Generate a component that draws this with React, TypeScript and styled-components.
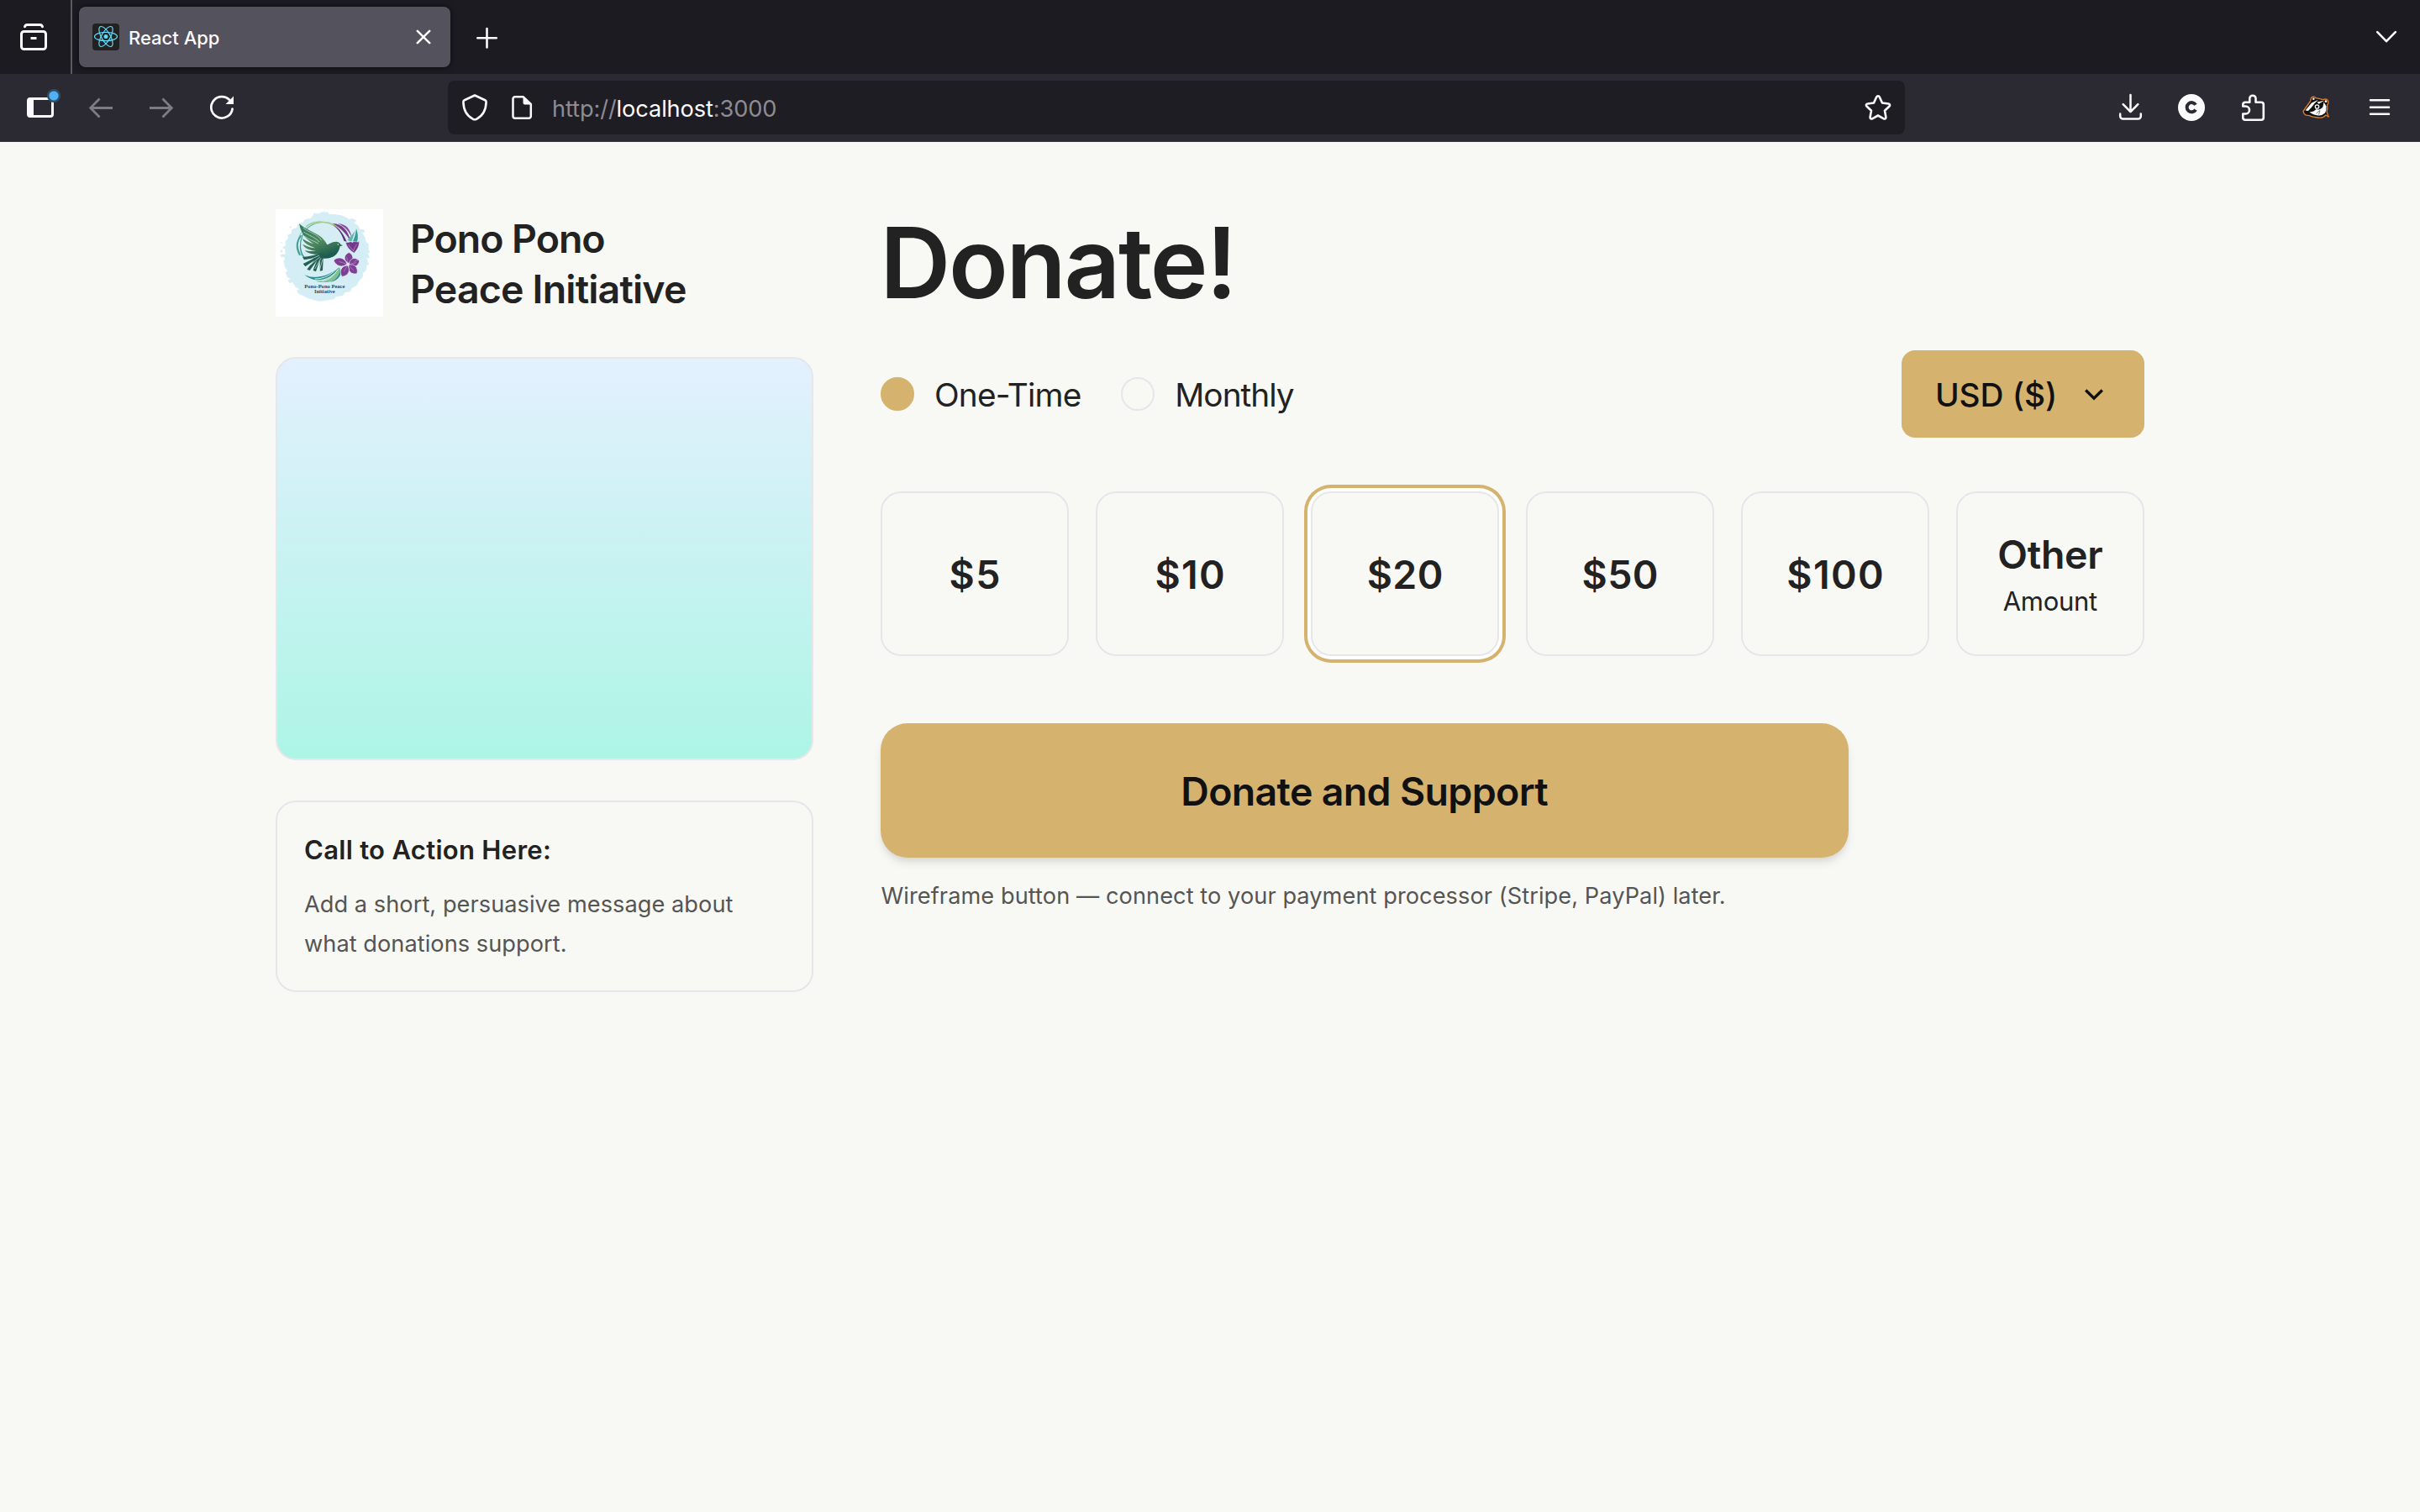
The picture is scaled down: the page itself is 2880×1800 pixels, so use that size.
import React, { useState } from 'react';
import styled, { createGlobalStyle, css } from 'styled-components';

const color = {
  page: '#f8f9f4',
  ink: '#222222',
  muted: '#555555',
  gold: '#d5b36e',
  line: '#e6e6eb',
  tabStrip: '#1c1b21',
  toolbar: '#2b2a32',
  field: '#1e1d23',
  chrome: '#fbfbfe',
};

const GlobalStyle = createGlobalStyle`
  *, *::before, *::after { box-sizing: border-box; }
  body {
    margin: 0;
    background: ${color.page};
    color: ${color.ink};
    font-family: Inter, "Liberation Sans", sans-serif;
  }
  button { font: inherit; color: inherit; cursor: pointer; }
  h1, h2, p { margin: 0; }
  svg { display: block; flex: none; overflow: visible; }
`;

/* ---------- text ---------- */

const Label = styled.span<{ $size: number; $weight?: number; $track?: number }>`
  display: block;
  padding-top: 0.05em;
  white-space: nowrap;
  line-height: 1.25;
  font-size: ${(p) => p.$size}px;
  font-weight: ${(p) => p.$weight ?? 400};
  letter-spacing: ${(p) => p.$track ?? 0}px;
  margin-right: ${(p) => -(p.$track ?? 0)}px;
`;

/* ---------- browser frame ---------- */

const TabStrip = styled.div`
  display: flex;
  align-items: center;
  height: 88px;
  background: ${color.tabStrip};
  color: ${color.chrome};
`;

const TabStripStart = styled.div`
  display: flex;
  align-items: center;
  width: 86px;
  height: 88px;
  padding-left: 24px;
  border-right: 2px solid #5b5a63;
`;

const Tab = styled.div`
  display: flex;
  align-items: center;
  width: 442px;
  height: 72px;
  margin-left: 8px;
  padding: 0 16px;
  border-radius: 8px;
  background: #54525d;
  box-shadow: 0 0 6px rgba(0, 0, 0, 0.6);
`;

const TabTitle = styled(Label)`
  flex: 1;
  margin-left: 11px;
  padding-top: 3px;
`;

const Favicon = styled.div`
  width: 32px;
  height: 32px;
  border-radius: 4px;
  background: #222222;
`;

const NewTab = styled.div`
  margin-left: 27px;
`;

const TabStripEnd = styled.div`
  margin-left: auto;
  padding-right: 24px;
`;

const Toolbar = styled.div`
  display: flex;
  align-items: center;
  height: 81px;
  padding: 0 32px;
  background: ${color.toolbar};
  border-bottom: 1px solid #3a3942;
  color: ${color.chrome};
`;

const NavButtons = styled.div`
  display: flex;
  gap: 40px;
  width: 501px;
`;

const AddressBar = styled.div`
  display: flex;
  align-items: center;
  width: 1734px;
  height: 64px;
  padding: 0 16px;
  border-radius: 8px;
  background: ${color.field};
`;

const SiteIcons = styled.div`
  display: flex;
  gap: 24px;
`;

const Address = styled(Label)`
  flex: 1;
  margin-left: 20px;
  padding-top: 3px;
  color: #8d8c93;
`;

const Host = styled.span`
  color: ${color.chrome};
`;

const Extensions = styled.div`
  display: grid;
  grid-template-columns: 72px 73px 75px 76px 32px;
  margin-left: auto;
`;

/* ---------- page ---------- */

const Page = styled.main`
  display: grid;
  grid-template-columns: 640px 1504px;
  column-gap: 80px;
  width: 2224px;
  margin: 0 auto;
  padding-top: 80px;
`;

const Aside = styled.aside`
  display: flex;
  flex-direction: column;
  gap: 48px;
`;

const Brand = styled.div`
  display: flex;
  align-items: center;
  gap: 32px;
`;

const LogoFrame = styled.div`
  width: 128px;
  height: 128px;
  background: #ffffff;
`;

const BrandName = styled.h2`
  padding-top: 1px;
  font-size: 46.5px;
  font-weight: 600;
  line-height: 60px;
`;

const BrandLine = styled.span<{ $track: number }>`
  display: block;
  letter-spacing: ${(p) => p.$track}px;
`;

const MediaPanel = styled.div`
  height: 480px;
  border: 2px solid ${color.line};
  border-radius: 24px;
  background: linear-gradient(180deg, #e3f0fe, #adf5e5);
`;

const Callout = styled.section`
  padding: 33px 32px 31px;
  border: 2px solid ${color.line};
  border-radius: 24px;
`;

const CalloutTitle = styled.h2`
  margin-bottom: 16px;
  font-size: 31px;
  font-weight: 600;
  line-height: 48.8px;
  letter-spacing: 0.3px;
`;

const CalloutText = styled.p`
  max-width: 560px;
  font-size: 27.2px;
  line-height: 47.6px;
  letter-spacing: 0.04px;
  color: ${color.muted};
`;

const Form = styled.section`
  display: flex;
  flex-direction: column;
  align-items: stretch;
`;

const Heading = styled.h1`
  height: 120px;
  padding-top: 3.5px;
  margin-left: -0.8px;
  font-size: 116.4px;
  font-weight: 600;
  line-height: 120px;
  letter-spacing: -2.29px;
`;

const OptionsRow = styled.div`
  display: flex;
  align-items: center;
  justify-content: space-between;
  margin-top: 48px;
`;

const Frequencies = styled.div`
  display: flex;
  gap: 47px;
`;

const Frequency = styled.button`
  display: flex;
  align-items: center;
  gap: 24px;
  padding: 0;
  border: 0;
  background: none;
`;

const Dot = styled.span<{ $on: boolean }>`
  width: 40px;
  height: 40px;
  border-radius: 50%;
  border: 2px solid ${(p) => (p.$on ? color.gold : color.line)};
  background: ${(p) => (p.$on ? color.gold : 'transparent')};
`;

const Currency = styled.button`
  display: flex;
  align-items: center;
  justify-content: space-between;
  width: 289px;
  height: 104px;
  padding: 0 44px 0 40px;
  border: 0;
  border-radius: 16px;
  background: ${color.gold};
  color: #111111;
`;

const Amounts = styled.div`
  display: grid;
  grid-template-columns: repeat(6, 1fr);
  gap: 32px;
  margin-top: 64px;
`;

const Amount = styled.button<{ $on: boolean }>`
  display: flex;
  flex-direction: column;
  align-items: center;
  justify-content: center;
  height: 196px;
  padding: 0;
  border: 2px solid ${color.line};
  border-radius: 24px;
  background: ${color.page};
  ${(p) =>
    p.$on &&
    css`
      box-shadow: 0 0 0 4px #ffffff, 0 0 0 8px ${color.gold};
    `}
`;

const OtherTitle = styled(Label)`
  padding-top: 3px;
  line-height: 56px;
`;

const OtherNote = styled(Label)`
  padding-top: 6px;
  line-height: 44px;
`;

const DonateButton = styled.button`
  display: flex;
  align-items: center;
  justify-content: center;
  width: 1152px;
  height: 160px;
  margin-top: 80px;
  border: 0;
  border-radius: 32px;
  background: ${color.gold};
  color: #111111;
  box-shadow: 0 8px 12px -2px rgba(0, 0, 0, 0.1), 0 4px 8px -4px rgba(0, 0, 0, 0.1);
`;

const Note = styled.p`
  margin: 26px 0 0 0.5px;
  font-size: 27.2px;
  line-height: 40px;
  letter-spacing: 0.06px;
  color: ${color.muted};
`;

/* ---------- icons ---------- */

const Icon = ({ children, w = 32, h = 32, sw = 3 }: { children: React.ReactNode; w?: number; h?: number; sw?: number }) => (
  <svg width={w} height={h} viewBox={`0 0 ${w} ${h}`} fill="none" stroke="currentColor" strokeWidth={sw} strokeLinecap="round" strokeLinejoin="round">
    {children}
  </svg>
);

const ArchiveIcon = () => (
  <Icon>
    <rect x="1.5" y="9.5" width="29" height="21" rx="3" />
    <path d="M5.5 3.8C6 2.2 7 1.5 8.500 1.500h15c1.500 0 2.500.7 3 2.300" />
    <path d="M12.500 17.500h7" strokeLinecap="butt" />
  </Icon>
);

const ReactIcon = () => (
  <svg width="32" height="32" viewBox="0 0 32 32" fill="none" stroke="#61dafb" strokeWidth="1.2">
    <ellipse cx="16" cy="15.500" rx="13.500" ry="5.200" />
    <ellipse cx="16" cy="15.500" rx="13.500" ry="5.200" transform="rotate(60 16 15.500)" />
    <ellipse cx="16" cy="15.500" rx="13.500" ry="5.200" transform="rotate(120 16 15.500)" />
    <circle cx="16" cy="15.500" r="2.500" fill="#61dafb" stroke="none" />
  </svg>
);

const SidebarIcon = () => (
  <Icon>
    <rect x="1.500" y="5.500" width="29" height="21" rx="2.500" />
    <path d="M1.500 7v18q0 1.500 1.500 1.500h5v-21H3Q1.500 5.500 1.500 7z" fill="currentColor" stroke="none" />
    <circle cx="32" cy="2" r="8" fill="#2c4f68" stroke="none" />
    <circle cx="32" cy="2" r="5.600" fill="#52b0f5" stroke="none" />
  </Icon>
);

const BackIcon = () => (
  <svg width="32" height="32" viewBox="0 0 32 32" fill="none" stroke="#7d7c83" strokeWidth="2.800">
    <path d="M30 16.500H3.500M14.500 5.500 3.700 16.500 14.500 27.500" />
  </svg>
);

const ForwardIcon = () => (
  <svg width="32" height="32" viewBox="0 0 32 32" fill="none" stroke="#7d7c83" strokeWidth="2.800">
    <path d="M2 16.500h26.500M17.500 5.500 28.300 16.500 17.500 27.500" />
  </svg>
);

const ReloadIcon = () => (
  <Icon sw={2.700}>
    <path d="M28.600 17.500A12.700 12.700 0 1 1 25 6.800" />
    <path d="M30 2.500v9.500h-9.500z" fill="currentColor" stroke="none" />
  </Icon>
);

const ShieldIcon = () => (
  <Icon sw={2.600}>
    <path d="M16 1.500 28.300 7.200Q29.700 8 29.600 9.500C29.300 20 24.500 26.500 18 29.800q-2 1-4 0C7.500 26.500 2.700 20 2.400 9.500Q2.300 8 3.700 7.200z" />
  </Icon>
);

const PageIcon = () => (
  <Icon sw={2.500}>
    <path d="M8 3.200h9.500L26.800 12v14.300a2.500 2.500 0 0 1-2.500 2.500H8a2.500 2.500 0 0 1-2.500-2.500V5.700A2.500 2.500 0 0 1 8 3.200z" />
    <path d="M17.500 3 27 12.500h-7.500a2 2 0 0 1-2-2z" fill="currentColor" stroke="none" />
  </Icon>
);

const StarIcon = () => (
  <Icon sw={2.600}>
    <path d="M14.300 3.300a1.900 1.900 0 0 1 3.400 0l3.300 7.200 7.600 1a1.700 1.700 0 0 1 .9 3l-5.500 5.300 1.400 7.700a1.700 1.700 0 0 1-2.500 1.800L16 25.500l-6.900 3.800a1.700 1.700 0 0 1-2.500-1.800L8 19.800 2.500 14.500a1.700 1.700 0 0 1 .9-3l7.600-1z" />
  </Icon>
);

const DownloadIcon = () => (
  <Icon sw={2.500}>
    <path d="M15.500 1v20M6.700 12.200l8.800 9 8.800-9" />
    <path d="M3.200 23.500v2.800a3.200 3.200 0 0 0 3.200 3.200h18.200a3.200 3.200 0 0 0 3.200-3.200v-2.800" />
  </Icon>
);

const CIcon = () => (
  <Icon>
    <circle cx="16" cy="16" r="16" fill="currentColor" stroke="none" />
    <path d="M21 12.800A5.600 5.600 0 1 0 21 18.600" stroke={color.toolbar} strokeWidth="4" strokeLinecap="butt" />
  </Icon>
);

const PuzzleIcon = () => (
  <Icon sw={2.600}>
    <path d="M12.300 9.800V5.300a3.600 3.600 0 0 1 7.200 0v4.500h6.500a2.800 2.800 0 0 1 2.800 2.800V28a2.700 2.700 0 0 1-2.700 2.700H7A2.700 2.700 0 0 1 4.300 28v-4.500h3.200a4.500 4.500 0 0 0 0-9H4.300v-1.900a2.800 2.800 0 0 1 2.800-2.800z" />
  </Icon>
);

const BadgerIcon = () => (
  <svg width="32" height="32" viewBox="0 0 32 32">
    <path d="M1 20.500 9.500 8.500l1-4q3-2.500 5.500.2 5 1 8.500 2 4-1.800 6 1 1.200 3-1 5.500 1 4-.5 7.500l2.200 6.500-3.200-2.200q-3.500 4-9 3-7-.5-11.500-2.700-5 1-6.500-4.800z" fill="#111" stroke="#e07e27" strokeWidth="1.300" strokeLinejoin="round" />
    <path d="M3.500 19.500 11 10.500 19 6.800q-4.500 3.700-8.500 9.500L7 20z" fill="#fff" />
    <path d="M8.500 21.500q5.500-.5 8-3.500 5 1.500 8-3l1-5.500 3 5q.5 5-1.500 8-4 3.500-8 3-6-.5-10.500-4z" fill="#fff" />
    <path d="m17.500 9.500 8.500-1.700-6.500 4z" fill="#fff" />
    <circle cx="17.500" cy="15" r="2.200" fill="#111" stroke="#fff" strokeWidth="1.300" />
    <circle cx="13.300" cy="5.800" r="1.300" fill="#fff" />
    <circle cx="28" cy="8.700" r="1.400" fill="#fff" />
    <path d="m16.500 23 4.500-3.500-1.500 5" fill="none" stroke="#555" strokeWidth=".8" />
  </svg>
);

const MenuIcon = () => (
  <Icon sw={2.500}>
    <path d="M5 7.200h22M5 15.700h22M5 23.700h22" />
  </Icon>
);

const petal = 'M0 0C-20-8-22-32-3-45 15-37 20-14 0 0z';

const Logo = () => (
  <svg width="128" height="128" viewBox="24 27 384 384" role="img" aria-label="Pono-Pono Peace Initiative">
    <defs>
      <linearGradient id="ring" x1="0" y1="1" x2="1" y2="0">
        <stop offset="0" stopColor="#2f8f8a" />
        <stop offset="0.500" stopColor="#5db7a5" />
        <stop offset="1" stopColor="#bcd58c" />
      </linearGradient>
      <linearGradient id="bird" x1="0" y1="0" x2="0.500" y2="1">
        <stop offset="0" stopColor="#2e7557" />
        <stop offset="0.600" stopColor="#4e8a5c" />
        <stop offset="1" stopColor="#1d5b50" />
      </linearGradient>
    </defs>
    <path
      fill="#d5eef5"
      d="M160 42l18 1 14-7 20 2 3 7 24 1 20 3 18 8 8 7 14-4 14 8-8 8 14 10 6 12 14 2 4 8-10 4 10 14 4 18 10 12-2 12 6 16-8-2 6 18-10 0 8 24-8 4-2 18-10 8-2 16-14 14-8 16-16 8-6 14-18 2-10 12-24 4-6 8-28 5-26 3-20-5-22-6-16-10-14-4-8-14 10-4-14-8-10-16-14 2-2-10 8-4-12-8-6-18 8-2-10-14-4-20 4-14-12-6 4-8 10 2-2-20-10-4 12-8 0-16 10-10-2-12 12-4 4-16 16-6 4-12 18-6 8-12 20-4 8-8z"
    />
    <path d="M42 172l6 2v8l-7-2zM40 190l8-2-2 14zM40 145l6-2v6zM344 186l14 14-3 4-13-12zM340 150l12-4 6 10-12 0zM66 250l8 4-6 8zM72 92l10-6-4 10z" fill="#d5eef5" />
    <g fill="none" strokeLinecap="round">
      <path d="M125 198C95 160 118 78 190 74c30-2 55 10 64 30" stroke="url(#ring)" strokeWidth="4" />
      <path d="M116 192C84 150 112 78 186 70" stroke="url(#ring)" strokeWidth="2" />
      <path d="M134 88C158 66 216 66 244 96" stroke="#a9cd8f" strokeWidth="4" />
      <path d="M110 190C96 165 100 140 114 122" stroke="#3e9d8e" strokeWidth="5" />
    </g>
    <path d="M228 78c34 2 56 24 64 66-12-24-30-46-64-66z" fill="#7a3b8c" />
    <path d="M246 78c30 2 44 18 50 50-12-24-24-38-50-50z" fill="#8f4fa0" />
    <path d="M228 82c26 16 40 36 50 62l-10-4c-8-24-18-40-40-58z" fill="#5e2c73" />
    <path d="M312 96c6 18 8 34 2 50l-14-4c6-14 10-28 12-46z" fill="#3a9c94" />
    <path d="M308 104c-8 12-20 24-28 34l16 4z" fill="#5fb7a5" />
    <path d="M274 144c10 6 16-6 24 2 8-8 16 2 24-4 2 16-6 30-18 42-14-10-28-22-30-40z" fill="#74388a" stroke="#d5eef5" strokeWidth="2" />
    <path d="M284 154c8 12 14 18 20 24M314 152c-6 8-10 16-12 24" stroke="#c7a0d0" strokeWidth="2" fill="none" />
    <path d="M127 262c38 14 84 6 124-28-20 34-58 52-92 44-12-3-22-8-32-16z" fill="#2f8f8a" />
    <path d="M168 284c42 0 66-20 84-50 14 22-18 56-50 54-12 0-24-1-34-4z" fill="#7fc08f" />
    <path d="M142 266c36 6 72-4 98-26M164 276c34 0 60-16 80-38M190 284c26-4 44-20 56-42" stroke="#d5eef5" strokeWidth="3" fill="none" />
    <path d="M218 288c20-8 34-22 36-44 8 18-6 38-36 44z" fill="#2d8c8c" />
    <path
      fill="url(#bird)"
      d="M108 78c28 30 80 32 100 76 8-2 14-10 28-10 10-2 18 4 20 9l8 4-10 3c-4 20-14 36-38 42-20 4-34 0-38-14-12 2-40-2-50-14 12 4 30 4 40 2-20-2-40-8-48-24 16 8 32 14 46 14-22-8-42-18-46-34 12 8 26 16 40 18-22-12-44-28-52-72z"
    />
    <path
      fill="#245f50"
      d="M196 182c-24 6-50 14-76 16l6 10 34-6c-16 10-28 16-38 20l8 10 32-22c-12 14-20 24-26 32l10 4 26-36c-6 14-12 26-14 36l10 4 14-42 0 40 10-2 2-40z"
    />
    <path
      d="M122 94c20 16 50 20 66 44M124 108c20 14 40 18 56 36M128 124c14 12 34 16 48 26M136 212l44-20M148 226l34-28M164 240l22-38M180 248l12-42"
      stroke="#d5eef5"
      strokeWidth="2"
      fill="none"
    />
    <circle cx="247" cy="153" r="2" fill="#fff" />
    <g fill="#7c3f92" stroke="#e3eef6" strokeWidth="2">
      <path d={petal} transform="translate(284 220) rotate(8) scale(1 0.850)" />
      <path d={petal} transform="translate(286 222) rotate(80) scale(1 0.850)" />
      <path d={petal} transform="translate(285 226) rotate(140) scale(0.950)" />
      <path d={petal} transform="translate(280 227) rotate(208)" />
      <path d={petal} transform="translate(279 222) rotate(288) scale(1 1.100)" />
    </g>
    <path d="M282 224l-4-26M282 224l30-6M282 224l20 22M282 224l-14 26M282 224l-32-10M304 214l16-7" stroke="#c8a6d4" strokeWidth="1.500" fill="none" />
    <circle cx="283" cy="224" r="4" fill="#f4e3f5" />
    <g fill="#2b4965" fontFamily='"Liberation Serif", serif' fontSize="19" fontWeight="700" textAnchor="middle">
      <text x="199" y="310" textLength="144" lengthAdjust="spacingAndGlyphs">Pono-Pono Peace</text>
      <text x="199" y="326" textLength="74" lengthAdjust="spacingAndGlyphs">Initiative</text>
    </g>
  </svg>
);

/* ---------- data ---------- */

const frequencies = [
  { name: 'One-Time', track: -0.845 },
  { name: 'Monthly', track: -1.0 },
];

const amounts = [
  { name: '$5', track: 1.4 },
  { name: '$10', track: 1.3 },
  { name: '$20', track: 0.4 },
  { name: '$50', track: 0.45 },
  { name: '$100', track: 1.4 },
];

export default function App() {
  const [frequency, setFrequency] = useState('One-Time');
  const [amount, setAmount] = useState('$20');

  return (
    <>
      <GlobalStyle />
      <TabStrip>
        <TabStripStart>
          <ArchiveIcon />
        </TabStripStart>
        <Tab>
          <Favicon>
            <ReactIcon />
          </Favicon>
          <TabTitle $size={22} $weight={500}>React App</TabTitle>
          <Icon sw={2.500}>
            <path d="M8.800 8.800 23.200 23.200M23.200 8.800 8.800 23.200" />
          </Icon>
        </Tab>
        <NewTab>
          <Icon sw={2.600}>
            <path d="M16.500 6v22.500M5.300 17.200h22.500" />
          </Icon>
        </NewTab>
        <TabStripEnd>
          <Icon sw={2.600}>
            <path d="M5.200 10.200 16 21.200 26.800 10.200" />
          </Icon>
        </TabStripEnd>
      </TabStrip>
      <Toolbar>
        <NavButtons>
          <SidebarIcon />
          <BackIcon />
          <ForwardIcon />
          <ReloadIcon />
        </NavButtons>
        <AddressBar>
          <SiteIcons>
            <ShieldIcon />
            <PageIcon />
          </SiteIcons>
          <Address $size={27.2} $track={-0.1}>
            http://<Host>localhost</Host>:3000
          </Address>
          <StarIcon />
        </AddressBar>
        <Extensions>
          <DownloadIcon />
          <CIcon />
          <PuzzleIcon />
          <BadgerIcon />
          <MenuIcon />
        </Extensions>
      </Toolbar>
      <Page>
        <Aside>
          <Brand>
            <LogoFrame>
              <Logo />
            </LogoFrame>
            <BrandName>
              <BrandLine $track={-1.07}>Pono Pono</BrandLine>
              <BrandLine $track={-0.83}>Peace Initiative</BrandLine>
            </BrandName>
          </Brand>
          <MediaPanel />
          <Callout>
            <CalloutTitle>Call to Action Here:</CalloutTitle>
            <CalloutText>Add a short, persuasive message about what donations support.</CalloutText>
          </Callout>
        </Aside>
        <Form>
          <Heading>Donate!</Heading>
          <OptionsRow>
            <Frequencies>
              {frequencies.map((f) => (
                <Frequency key={f.name} onClick={() => setFrequency(f.name)}>
                  <Dot $on={frequency === f.name} />
                  <Label $size={38.8} $track={f.track}>{f.name}</Label>
                </Frequency>
              ))}
            </Frequencies>
            <Currency>
              <Label $size={38.8} $weight={500} $track={-0.1}>USD ($)</Label>
              <Icon sw={3.400}>
                <path d="M6.200 11.500 16 21.200 25.800 11.500" strokeLinecap="butt" strokeLinejoin="miter" />
              </Icon>
            </Currency>
          </OptionsRow>
          <Amounts>
            {amounts.map((a) => (
              <Amount key={a.name} $on={amount === a.name} onClick={() => setAmount(a.name)}>
                <Label $size={46.5} $weight={600} $track={a.track}>{a.name}</Label>
              </Amount>
            ))}
            <Amount $on={amount === 'Other'} onClick={() => setAmount('Other')}>
              <OtherTitle $size={46.5} $weight={600} $track={-0.3}>Other</OtherTitle>
              <OtherNote $size={31} $track={-0.3}>Amount</OtherNote>
            </Amount>
          </Amounts>
          <DonateButton>
            <Label $size={46.5} $weight={600} $track={-0.67}>Donate and Support</Label>
          </DonateButton>
          <Note>Wireframe button — connect to your payment processor (Stripe, PayPal) later.</Note>
        </Form>
      </Page>
    </>
  );
}
